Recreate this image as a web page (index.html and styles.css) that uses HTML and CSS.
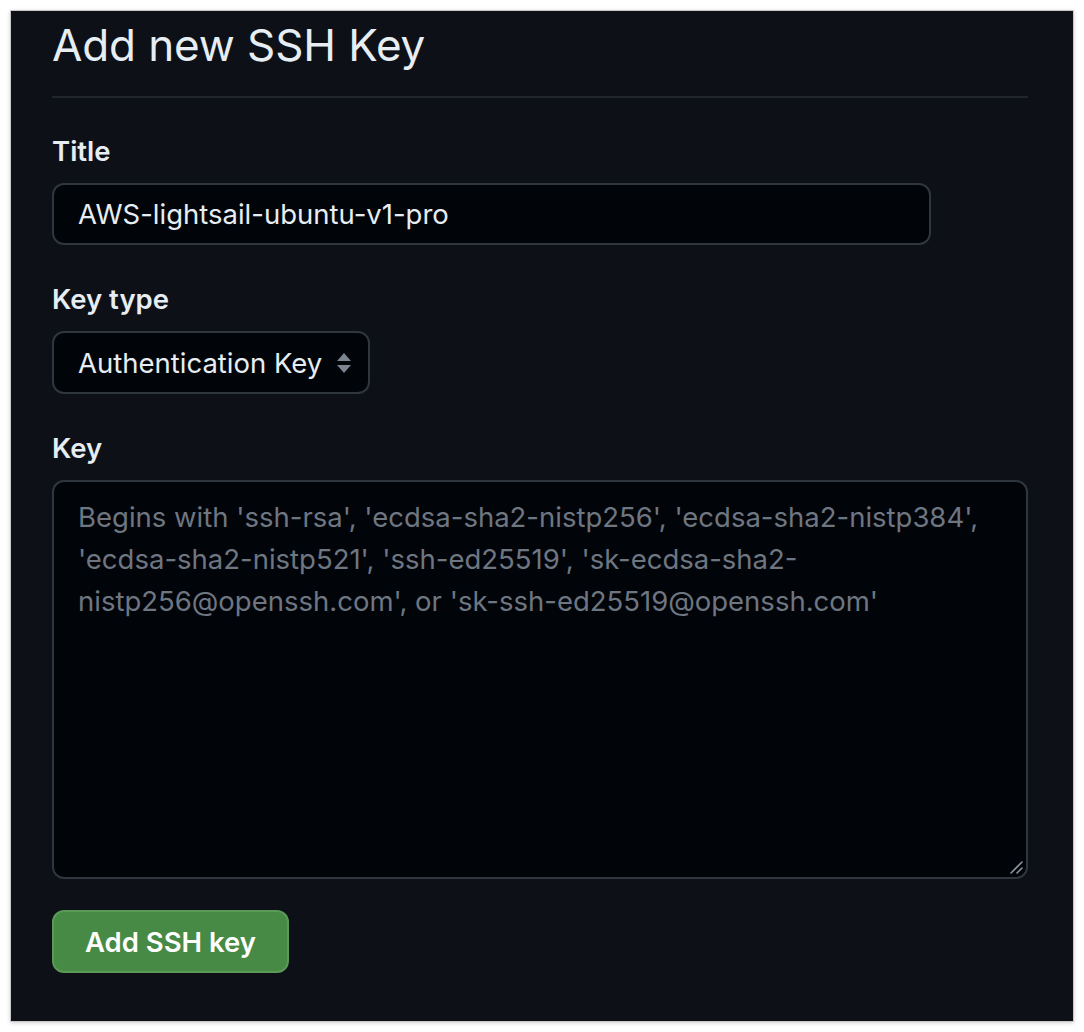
FILE: index.html
```html
<!DOCTYPE html>
<html lang="en">
<head>
<meta charset="utf-8">
<title>Add new SSH Key</title>
<link rel="stylesheet" href="styles.css">
</head>
<body>
<div class="panel">
  <h1 class="heading">Add new SSH Key</h1>
  <div class="form">
    <div class="group">
      <label class="label">Title</label>
      <div class="input title-input">AWS-lightsail-ubuntu-v1-pro</div>
    </div>
    <div class="group">
      <label class="label">Key type</label>
      <div class="input select">
        <span>Authentication Key</span>
        <svg class="select-arrow" width="16" height="24" viewBox="0 0 16 24" aria-hidden="true">
          <path d="M8 2 L15 10 H1 Z" fill="#7d8590"/>
          <path d="M8 22 L15 14 H1 Z" fill="#7d8590"/>
        </svg>
      </div>
    </div>
    <div class="group group-last">
      <label class="label">Key</label>
      <div class="input textarea">
        <div class="placeholder">Begins with 'ssh-rsa', 'ecdsa-sha2-nistp256', 'ecdsa-sha2-nistp384',<br>'ecdsa-sha2-nistp521', 'ssh-ed25519', 'sk-ecdsa-sha2-<br>nistp256@openssh.com', or 'sk-ssh-ed25519@openssh.com'</div>
        <svg class="resize" width="16" height="16" viewBox="0 0 16 16" aria-hidden="true">
          <path d="M3 14 L14 3" stroke="#8b949e" stroke-width="1.6" stroke-linecap="round"/>
          <path d="M9 14 L14 9" stroke="#8b949e" stroke-width="1.6" stroke-linecap="round"/>
        </svg>
      </div>
    </div>
    <div class="actions">
      <button class="btn-primary" type="button">Add SSH key</button>
    </div>
  </div>
</div>
</body>
</html>
```

FILE: styles.css
```css
html, body {
  margin: 0;
  padding: 0;
  background: #ffffff;
}

body {
  font-family: Inter, "Noto Sans", "Liberation Sans", sans-serif;
  color: #e6edf3;
}

.panel {
  margin: 10px;
  height: 1012px;
  box-sizing: border-box;
  background: #0d1117;
  border: 1px solid #c9c9c9;
  box-shadow: 0 1px 4px rgba(0, 0, 0, 0.18);
  padding: 4px 45px 0 41px;
}

.heading {
  margin: 0;
  font-size: 44px;
  line-height: 60px;
  font-weight: 400;
  letter-spacing: -0.1px;
  color: #e6edf3;
  padding-bottom: 21px;
  border-bottom: 2px solid #21262d;
}

.form {
  display: flex;
  flex-direction: column;
  padding-top: 35px;
}

.group {
  display: flex;
  flex-direction: column;
  gap: 14px;
  margin-bottom: 36px;
}

.group-last {
  margin-bottom: 31px;
}

.label {
  font-size: 27.5px;
  line-height: 36px;
  font-weight: 600;
  color: #e6edf3;
}

.input {
  box-sizing: border-box;
  background: #010409;
  border: 2px solid #30363d;
  border-radius: 12px;
  font-size: 27.5px;
  color: #e6edf3;
}

.title-input {
  width: 879px;
  height: 62px;
  display: flex;
  align-items: center;
  padding: 0 24px;
}

.select {
  width: 318px;
  height: 63px;
  display: flex;
  align-items: center;
  justify-content: space-between;
  padding: 0 16px 0 24px;
}

.select-arrow {
  display: block;
}

.textarea {
  position: relative;
  height: 399px;
  padding: 14px 24px;
}

.placeholder {
  font-size: 27.5px;
  line-height: 42px;
  color: #6e7681;
  white-space: nowrap;
}

.resize {
  position: absolute;
  right: 2px;
  bottom: 2px;
}

.actions {
  display: flex;
}

.btn-primary {
  font-family: inherit;
  height: 63px;
  width: 237px;
  box-sizing: border-box;
  border-radius: 12px;
  border: 2px solid #5a9a56;
  background: #468a45;
  color: #ffffff;
  font-size: 27.5px;
  font-weight: 600;
  padding: 0;
  cursor: pointer;
}
```
